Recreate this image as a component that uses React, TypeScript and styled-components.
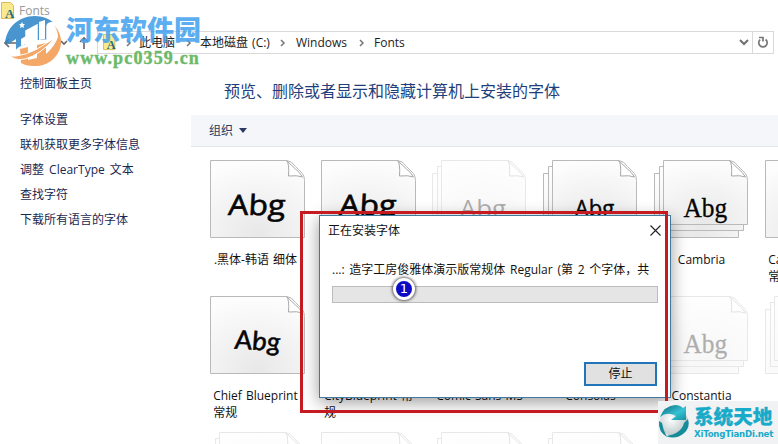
import React from "react";
import styled, { createGlobalStyle, css } from "styled-components";

const Global = createGlobalStyle`
  * { box-sizing: border-box; }
  body { margin: 0; background: #fff; overflow: hidden; }
`;

const Window = styled.div`
  position: relative;
  width: 778px;
  height: 444px;
  overflow: hidden;
  background: #fff;
  color: #1c1c1c;
  font: 12px/16px "Open Sans", "Noto Sans CJK SC", sans-serif;
  word-spacing: 1px;
  white-space: nowrap;
`;

const TitleBar = styled.header`
  height: 31px;
  padding: 2px 0 0 1px;
  display: flex;
  align-items: flex-start;
`;
const TitleText = styled.span`
  margin-top: 1px;
  color: #999;
  font-size: 12px;
`;
const NavBar = styled.nav`
  height: 23px;
  display: flex;
  align-items: stretch;
  padding-right: 4px;
`;
const NavButtons = styled.div`
  width: 97px;
  display: flex;
  align-items: center;
  padding-left: 4px;
`;
const AddressBox = styled.div`
  flex: 1;
  display: flex;
  align-items: center;
  border: 1px solid #d9d9d9;
  padding-left: 5px;
`;
const Crumb = styled.span<{ $w: number }>`
  width: ${(p) => p.$w}px;
  flex: none;
`;
const Separator = styled.span<{ $w: number }>`
  width: ${(p) => p.$w}px;
  display: flex;
  flex: none;
`;
const Spacer = styled.span`
  flex: 1;
`;
const RefreshBox = styled.div`
  width: 21px;
  align-self: stretch;
  border-left: 1px solid #d9d9d9;
  display: grid;
  place-items: center;
  margin-left: 3px;
`;

const Body = styled.div`
  display: flex;
  height: 390px;
`;
const Sidebar = styled.aside`
  width: 191px;
  padding: 22px 0 0 20px;
  display: flex;
  flex-direction: column;
  color: #1b2850;
  word-spacing: 2px;
`;
const SideLink = styled.a<{ $gap?: number }>`
  height: 16px;
  margin-bottom: ${(p) => p.$gap ?? 9}px;
`;
const Main = styled.main`
  flex: 1;
  min-width: 0;
  overflow: hidden;
`;
const Heading = styled.h1`
  margin: 0;
  height: 61px;
  padding: 25px 0 0 33px;
  font-weight: 400;
  font-size: 16px;
  line-height: 24px;
  color: #1e3f7c;
`;
const CommandBar = styled.div`
  height: 32px;
  background: #f4f6f9;
  border-bottom: 1px solid #e3e6ea;
  padding-left: 18px;
  display: flex;
  align-items: center;
  gap: 6px;
  color: #2a3a63;
`;
const FontGrid = styled.div`
  display: grid;
  grid-template-columns: repeat(6, 111px);
  grid-auto-rows: 136px;
  padding: 13px 0 0 19px;
`;
const FontItem = styled.div`
  width: 95px;
  display: flex;
  flex-direction: column;
  align-items: center;
`;
const Preview = styled.div<{ $faded?: boolean }>`
  display: grid;
  width: 96px;
  height: 80px;
  opacity: ${(p) => (p.$faded ? 0.32 : 1)};
  & > * { grid-area: 1 / 1; }
`;
const samples = {
  brush: css`
    font: 28px/36px "Open Sans", sans-serif;
    -webkit-text-stroke: 0.6px #050505;
    transform: scaleX(1.14) skewX(-3deg);
  `,
  hand: css`
    font: italic 26px/36px Lato, sans-serif;
    -webkit-text-stroke: 0.5px #050505;
    transform: scaleX(1.07) skewX(6deg) rotate(3deg);
  `,
  sans: css`font: 26px/36px "Open Sans", sans-serif;`,
  calibri: css`font: 24px/36px "Open Sans", sans-serif; -webkit-text-stroke: 0.4px #050505; transform: scaleX(0.92);`,
  serif: css`font: 27px/36px "Liberation Serif", serif; -webkit-text-stroke: 0.3px #050505; transform: scaleX(0.94);`,
};
type SampleKind = keyof typeof samples;
const Sample = styled.span<{ $kind: SampleKind; $stacked?: boolean }>`
  justify-self: center;
  align-self: start;
  margin-top: ${(p) => (p.$stacked ? 30 : 26)}px;
  margin-left: ${(p) => (p.$stacked ? 7 : 0)}px;
  color: #050505;
  ${(p) => samples[p.$kind]}
`;
const Label = styled.div`
  margin-top: 11px;
  line-height: 17px;
  color: #111;
  white-space: pre;
`;

const Dialog = styled.section`
  position: absolute;
  left: 319px;
  top: 215px;
  width: 352px;
  height: 183px;
  background: #fff;
  border: 1px solid #40799f;
  box-shadow: 0 4px 16px rgba(0, 0, 0, 0.4);
  padding: 0 12px;
  display: flex;
  flex-direction: column;
  color: #111;
`;
const DialogTitle = styled.div`
  height: 29px;
  margin: 0 -3px 0 -4px;
  display: flex;
  align-items: center;
  justify-content: space-between;
`;
const Message = styled.div`
  margin-top: 17px;
  height: 24px;
  overflow: hidden;
  line-height: 16px;
  word-spacing: 1.6px;
`;
const Progress = styled.div`
  height: 17px;
  background: #e5e5e5;
  border: 1px solid #bcbcbc;
`;
const StopButton = styled.button`
  margin: 59px 1px 0 0;
  align-self: flex-end;
  width: 73px;
  height: 24px;
  padding: 0;
  background: #e1e1e1;
  border: 2px solid #2375b9;
  color: #111;
  font: inherit;
`;
const Highlight = styled.div`
  position: absolute;
  left: 300px;
  top: 211px;
  width: 368px;
  height: 202px;
  border: 3px solid #c41a20;
`;
const StepBadge = styled.div`
  position: absolute;
  left: 393px;
  top: 278px;
  width: 22px;
  height: 22px;
  border-radius: 50%;
  border: 3px solid #fff;
  background: #0c0cc4;
  box-shadow: 0 0 3px 1px rgba(0, 0, 0, 0.6);
  color: #fff;
  font: 13px/16px "DejaVu Sans", sans-serif;
  text-align: center;
`;

const SiteMark = styled.div`
  position: absolute;
  left: 4px;
  top: 14px;
  display: flex;
  opacity: 0.87;
`;
const SiteText = styled.div`
  display: flex;
  flex-direction: column;
  padding-left: 4px;
`;
const SiteName = styled.span`
  font: 900 27px/30px "Noto Sans CJK SC", sans-serif;
  color: #46a3ee;
`;
const SiteUrl = styled.span`
  font: bold 18px/20px "Liberation Serif", serif;
  letter-spacing: 1.15px;
  color: #55b054;
  -webkit-text-stroke: 0.4px #55b054;
  margin-top: 4px;
`;
const CornerMark = styled.div`
  position: absolute;
  left: 658px;
  top: 401px;
  width: 120px;
  height: 43px;
  background: #f0f2f3;
  display: flex;
  padding-top: 3px;
`;
const CornerText = styled.div`
  display: flex;
  flex-direction: column;
  color: #18aac9;
  padding-left: 2px;
`;
const CornerName = styled.span`
  font: 900 19.6px/23px "Noto Sans CJK SC", sans-serif;
  -webkit-text-stroke: 0.3px #18aac9;
`;
const CornerUrl = styled.span`
  margin-top: 1px;
  font: bold 8.6px/12px "DejaVu Sans", sans-serif;
  letter-spacing: -0.22px;
`;

const FolderIcon = ({ size = 18 }: { size?: number }) => (
  <svg width={size} height={size} viewBox="0 0 18 18">
    <path d="M.5.5h9l3 3v13H.5z" fill="#fbe98e" stroke="#d6bd59" />
    <text x="4" y="16" fontFamily="Liberation Serif" fontWeight="bold" fontSize="13" fill="#276c80">A</text>
  </svg>
);

const Chevron = () => (
  <svg width="6" height="8" viewBox="0 0 6 8">
    <path d="M1 1l3 3-3 3" fill="none" stroke="#777" strokeWidth="1.5" />
  </svg>
);

const outline = (x: number, y: number, w: number, h: number) =>
  `M${x} ${y}h${w - 18}q5 0 9 6l7 7q2 3 2 7v${h - 20}h${-w}z`;

const Paper = ({ stacked }: { stacked?: boolean }) => {
  const x = stacked ? 9.5 : 0.5;
  const w = stacked ? 84 : 94;
  const h = stacked ? 64 : 77;
  return (
    <svg width="96" height="80" viewBox="0 0 96 80">
      <defs>
        <radialGradient id="sheet" cx="0.5" cy="0.95" r="0.95">
          <stop offset="0" stopColor="#e8e8e8" />
          <stop offset="1" stopColor="#fdfdfd" />
        </radialGradient>
      </defs>
      <g fill="url(#sheet)" stroke="#b9b9b9">
        {stacked && <path d={outline(0.5, 13.5, 84, 64)} />}
        {stacked && <path d={outline(5.5, 6.5, 84, 64)} />}
        <path d={outline(x, 0.5, w, h)} />
        <path
          d={`M${x + w - 18} .5q3 3 2 15.500q9-1 14 1q-3-5-7-8z`}
          fill="#fff"
          stroke="#a8a8a8"
        />
      </g>
    </svg>
  );
};

interface FontEntry {
  label: string;
  kind: SampleKind;
  stacked?: boolean;
  faded?: boolean;
}
const fonts: FontEntry[] = [
  { label: ".黑体-韩语 细体 ", kind: "brush" },
  { label: "", kind: "brush" },
  { label: "", kind: "sans", stacked: true, faded: true },
  { label: "Calibri", kind: "calibri", stacked: true },
  { label: "Cambria", kind: "serif", stacked: true },
  { label: "Cambria Math  \n常规", kind: "serif" },
  { label: "Chief Blueprint \n常规", kind: "hand" },
  { label: "CityBlueprint 常\n规", kind: "hand" },
  { label: "Comic Sans MS", kind: "hand", stacked: true },
  { label: "Consolas", kind: "sans", stacked: true },
  { label: "Constantia", kind: "serif", stacked: true, faded: true },
  { label: "", kind: "sans", stacked: true, faded: true },
  { label: "", kind: "sans", stacked: true, faded: true },
  { label: "", kind: "sans", faded: true },
  { label: "", kind: "sans", stacked: true, faded: true },
  { label: "", kind: "sans", stacked: true, faded: true },
  { label: "", kind: "sans", stacked: true, faded: true },
  { label: "", kind: "sans", stacked: true, faded: true },
];

export default function App() {
  return (
    <Window>
      <Global />
      <TitleBar>
        <FolderIcon />
        <TitleText>Fonts</TitleText>
      </TitleBar>
      <NavBar>
        <NavButtons>
          <svg width="90" height="16" viewBox="0 0 90 16" fill="none" stroke="#666" strokeWidth="1.6">
            <path d="M12 8H1m4-4L1 8l4 4" />
            <path d="M57 6l3 3 3-3M80 14V3m-4 4l4-4 4 4" />
          </svg>
        </NavButtons>
        <AddressBox>
          <Separator $w={23}><FolderIcon size={17} /></Separator>
          <Separator $w={13}><Chevron /></Separator>
          <Crumb $w={47}>此电脑</Crumb>
          <Separator $w={14}><Chevron /></Separator>
          <Crumb $w={80}>本地磁盘 (C:)</Crumb>
          <Separator $w={16}><Chevron /></Separator>
          <Crumb $w={63}>Windows</Crumb>
          <Separator $w={15}><Chevron /></Separator>
          <Crumb $w={60}>Fonts</Crumb>
          <Spacer />
          <svg width="10" height="7" viewBox="0 0 10 7"><path d="M1 1l4 4 4-4" fill="none" stroke="#707070" strokeWidth="2" /></svg>
          <RefreshBox>
            <svg width="12" height="13" viewBox="0 0 12 13" fill="none" stroke="#777" strokeWidth="1.7">
              <path d="M8.6 3.5A4.2 4.2 0 1 1 3.2 3.6" />
              <path d="M2 1.500h4v4" />
            </svg>
          </RefreshBox>
        </AddressBox>
      </NavBar>
      <Body>
        <Sidebar>
          <SideLink $gap={20}>控制面板主页</SideLink>
          <SideLink>字体设置</SideLink>
          <SideLink>联机获取更多字体信息</SideLink>
          <SideLink>调整 ClearType 文本</SideLink>
          <SideLink>查找字符</SideLink>
          <SideLink>下载所有语言的字体</SideLink>
        </Sidebar>
        <Main>
          <Heading>预览、删除或者显示和隐藏计算机上安装的字体</Heading>
          <CommandBar>
            组织
            <svg width="8" height="5"><path d="M0 0h8L4 5z" fill="#2a3a63" /></svg>
          </CommandBar>
          <FontGrid>
            {fonts.map((f, i) => (
              <FontItem key={i}>
                <Preview $faded={f.faded}>
                  <Paper stacked={f.stacked} />
                  <Sample $kind={f.kind} $stacked={f.stacked}>Abg</Sample>
                </Preview>
                <Label>{f.label}</Label>
              </FontItem>
            ))}
          </FontGrid>
        </Main>
      </Body>

      <Dialog>
        <DialogTitle>
          正在安装字体
          <svg width="11" height="11" viewBox="0 0 11 11"><path d="M.5.5l10 10m0-10l-10 10" stroke="#222" strokeWidth="1.1" /></svg>
        </DialogTitle>
        <Message>...: 造字工房俊雅体演示版常规体 Regular (第 2 个字体，共</Message>
        <Progress />
        <StopButton>停止</StopButton>
      </Dialog>
      <Highlight />
      <StepBadge>1</StepBadge>

      <SiteMark>
        <svg width="58" height="54" viewBox="0 0 58 54">
          <path d="M1 30C2 14 14 2 31 2q11 0 19 7-6-1-7 3v14l-10 1V11l-11 6v14q-8 2-10 6V25l-6 4q-3 1-5 1z" fill="#2f86c8" />
          <path d="M12 37q2-4 10-6V17l11-6v16l10-1V12q1-4 7-3" fill="none" stroke="#fff" strokeWidth="1.5" />
          <path d="M17 25l5-3v8l-5 2zM35 8l6-2v19l-6 1z" fill="#fff" />
          <path d="M18 8l1 2 2 .3-1.500 1.400.4 2.300-1.900-1.100-2 1.100.5-2.300L15 10.300l2-.3z" fill="#fff" />
          <path d="M50 11q8 9 7 19c-2 14-14 23-28 22q-7 0-12-3l-1-14 8-2v13l9-2V31l9-2v11q9-8 12-17 0-6-4-12z" fill="#f39a50" />
          <path d="M4 37q1 6 8 5 10-1 21-7l18-11Q36 41 21 45 7 48 4 37z" fill="#f39a50" stroke="#fff" strokeWidth="1" />
        </svg>
        <SiteText>
          <SiteName>河东软件园</SiteName>
          <SiteUrl>www.pc0359.cn</SiteUrl>
        </SiteText>
      </SiteMark>
      <CornerMark>
        <svg width="34" height="36" viewBox="0 0 34 36">
          <defs>
            <linearGradient id="swirl" x1="0" y1="0" x2="1" y2="1">
              <stop offset="0" stopColor="#0d6577" />
              <stop offset="0.6" stopColor="#35c2d4" />
              <stop offset="1" stopColor="#16909f" />
            </linearGradient>
            <radialGradient id="globe" cx="0.4" cy="0.4" r="0.7">
              <stop offset="0" stopColor="#fff" />
              <stop offset="1" stopColor="#b3bfc1" />
            </radialGradient>
          </defs>
          <circle cx="16" cy="18" r="14" fill="url(#globe)" />
          <path d="M2 13Q6 2 17 1q5 0 8 3l3-2v14H13l5-4Q9 7 2 13z" fill="url(#swirl)" />
          <path d="M30 15q3 9-5 15-8 6-17 2 15-2 18-13z" fill="#168c9b" />
          <path d="M1 17q-1 11 8 16-4-7-5-14z" fill="#168c9b" />
        </svg>
        <CornerText>
          <CornerName>系统天地</CornerName>
          <CornerUrl>XiTongTianDi.net</CornerUrl>
        </CornerText>
      </CornerMark>
    </Window>
  );
}
